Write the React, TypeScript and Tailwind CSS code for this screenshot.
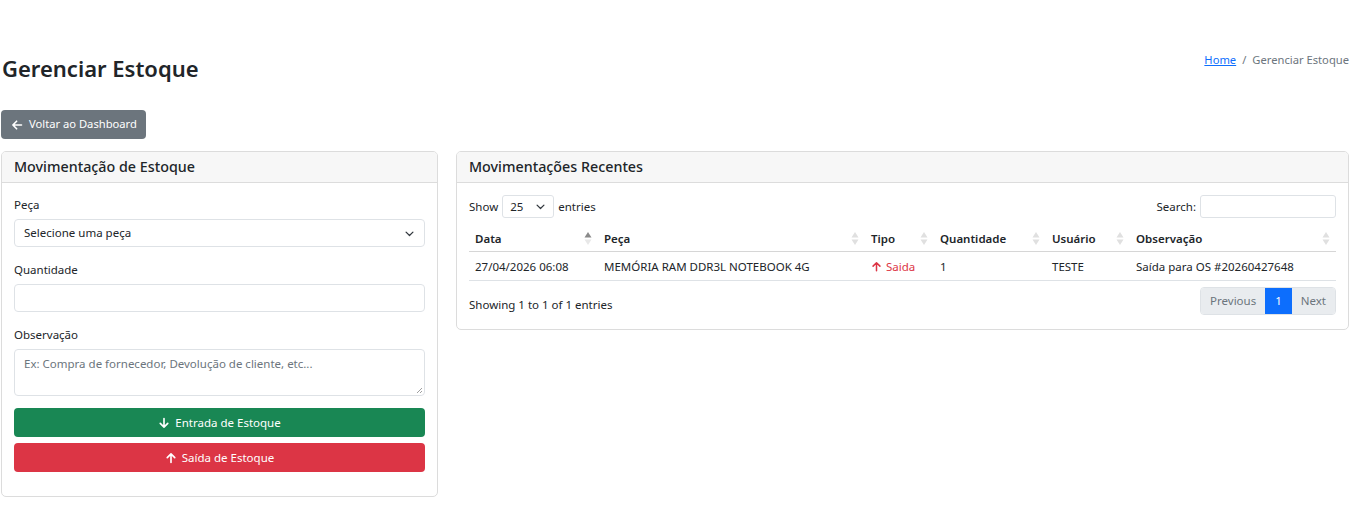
import React from "react";

const font = { fontFamily: '"Noto Sans", "Open Sans", sans-serif' };

function SortIcon({ active }: { active?: boolean }) {
  return (
    <svg width="8" height="15" viewBox="0 0 8 15" className="shrink-0">
      <path d="M4 1 L7.5 6.5 H0.5 Z" fill={active ? "#8a8a8a" : "#e0e0e0"} />
      <path d="M4 14 L7.5 8.5 H0.5 Z" fill={active ? "#e8e8e8" : "#e0e0e0"} />
    </svg>
  );
}

function Chevron() {
  return (
    <svg width="11" height="11" viewBox="0 0 16 16" fill="none" stroke="#343a40" strokeWidth="1.8" strokeLinecap="round" strokeLinejoin="round">
      <path d="M3 6l5 5 5-5" />
    </svg>
  );
}

function ArrowUp({ color = "#fff", size = 12 }: { color?: string; size?: number }) {
  return (
    <svg width={size} height={size} viewBox="0 0 16 16" fill="none" stroke={color} strokeWidth="2.2" strokeLinecap="round" strokeLinejoin="round">
      <path d="M8 14V2.5M3 7.5l5-5 5 5" />
    </svg>
  );
}
function ArrowDown({ color = "#fff", size = 12 }: { color?: string; size?: number }) {
  return (
    <svg width={size} height={size} viewBox="0 0 16 16" fill="none" stroke={color} strokeWidth="2.2" strokeLinecap="round" strokeLinejoin="round">
      <path d="M8 2v11.5M3 8.5l5 5 5-5" />
    </svg>
  );
}
function ArrowLeft() {
  return (
    <svg width="12" height="12" viewBox="0 0 16 16" fill="none" stroke="#fff" strokeWidth="2.2" strokeLinecap="round" strokeLinejoin="round">
      <path d="M14 8H2.5M7.5 3l-5 5 5 5" />
    </svg>
  );
}

export default function App() {
  const th = "h-[25px] px-[6px] text-left font-semibold text-[11.5px] text-[#212529]";
  const td = "px-[6px] h-[29px] pt-[2px]";
  return (
    <div className="min-h-[522px] bg-white text-[#212529] text-[11.5px]" style={font}>
      <div className="pl-[1px] pr-[8px] pt-[52px]">
        <div className="flex items-start justify-between">
          <h1 className="text-[22px] font-semibold leading-[34px] -mt-[1px] pl-[1px]">Gerenciar Estoque</h1>
          <div className="flex items-center gap-[6px] text-[11.2px] text-[#6c757d] mt-[0px]">
            <a className="text-[#0d6efd] underline">Home</a>
            <span>/</span>
            <span className="text-[#6c757d]">Gerenciar Estoque</span>
          </div>
        </div>

        <div className="mt-[25px]">
          <button className="flex items-center gap-[6px] h-[29px] pl-[10px] pr-[9px] rounded-[4px] bg-[#6c757d] text-white text-[11.2px]">
            <ArrowLeft />
            Voltar ao Dashboard
          </button>
        </div>

        <div className="mt-[12px] grid grid-cols-[437px_1fr] gap-[18px] items-start">
          {/* Left card */}
          <div className="border border-[#dcdcdc] rounded-[5px] overflow-hidden">
            <div className="h-[31px] bg-[#f7f7f7] border-b border-[#dcdcdc] px-[12px] flex items-center text-[14.3px] font-medium">
              Movimentação de Estoque
            </div>
            <div className="px-[12px] pt-[14px] pb-[24px]">
              <div className="text-[11.5px] leading-[16px]">Peça</div>
              <div className="mt-[6px] h-[28px] border border-[#dee2e6] rounded-[4px] flex items-center justify-between px-[9px] text-[11.5px]">
                <span>Selecione uma peça</span>
                <Chevron />
              </div>
              <div className="mt-[15px] text-[11.5px] leading-[16px]">Quantidade</div>
              <div className="mt-[6px] h-[28px] border border-[#dee2e6] rounded-[4px]" />
              <div className="mt-[15px] text-[11.5px] leading-[16px]">Observação</div>
              <div className="mt-[6px] h-[47px] border border-[#dee2e6] rounded-[4px] px-[9px] pt-[5px] text-[11.5px] text-[#6c757d] relative">
                Ex: Compra de fornecedor, Devolução de cliente, etc...
                <svg className="absolute right-[1px] bottom-[1px]" width="8" height="8" viewBox="0 0 8 8">
                  <path d="M7 2L2 7M7 5L5 7" stroke="#888" strokeWidth="0.8" />
                </svg>
              </div>
              <button className="mt-[12px] w-full h-[29px] rounded-[4px] bg-[#198754] text-white text-[11.5px] flex items-center justify-center gap-[5px]">
                <ArrowDown />
                Entrada de Estoque
              </button>
              <button className="mt-[6px] w-full h-[29px] rounded-[4px] bg-[#dc3545] text-white text-[11.5px] flex items-center justify-center gap-[5px]">
                <ArrowUp />
                Saída de Estoque
              </button>
            </div>
          </div>

          {/* Right card */}
          <div className="border border-[#dcdcdc] rounded-[5px] overflow-hidden">
            <div className="h-[31px] bg-[#f7f7f7] border-b border-[#dcdcdc] px-[12px] flex items-center text-[14.3px] font-medium">
              Movimentações Recentes
            </div>
            <div className="px-[12px] pt-[12px] pb-[14px]">
              <div className="flex items-center justify-between text-[11.5px] h-[23px]">
                <div className="flex items-center gap-[4px]">
                  <span>Show</span>
                  <div className="w-[52px] h-[23px] border border-[#dee2e6] rounded-[3px] flex items-center justify-between px-[7px]">
                    <span>25</span>
                    <Chevron />
                  </div>
                  <span>entries</span>
                </div>
                <div className="flex items-center gap-[4px]">
                  <span>Search:</span>
                  <div className="w-[136px] h-[23px] border border-[#dee2e6] rounded-[3px]" />
                </div>
              </div>
              <table className="w-full mt-[8px] border-collapse text-[11.5px]">
                <thead>
                  <tr className="border-b border-[#d6d6d6]">
                    <th className={th + " w-[129px]"}><div className="flex items-center justify-between">Data<SortIcon active /></div></th>
                    <th className={th + " w-[267px]"}><div className="flex items-center justify-between">Peça<SortIcon /></div></th>
                    <th className={th + " w-[69px]"}><div className="flex items-center justify-between">Tipo<SortIcon /></div></th>
                    <th className={th + " w-[112px]"}><div className="flex items-center justify-between">Quantidade<SortIcon /></div></th>
                    <th className={th + " w-[84px]"}><div className="flex items-center justify-between">Usuário<SortIcon /></div></th>
                    <th className={th}><div className="flex items-center justify-between">Observação<SortIcon /></div></th>
                  </tr>
                </thead>
                <tbody>
                  <tr className="border-b border-[#dee2e6]">
                    <td className={td}>27/04/2026 06:08</td>
                    <td className={td}>MEMÓRIA RAM DDR3L NOTEBOOK 4G</td>
                    <td className={td + " text-[#dc3545]"}><span className="flex items-center gap-[4px]"><ArrowUp color="#dc3545" size={11} />Saida</span></td>
                    <td className={td}>1</td>
                    <td className={td}>TESTE</td>
                    <td className={td}>Saída para OS #20260427648</td>
                  </tr>
                </tbody>
              </table>
              <div className="flex items-start justify-between mt-[6px] text-[11.5px]">
                <span className="pt-[10px] leading-[16px]">Showing 1 to 1 of 1 entries</span>
                <div className="flex h-[28px] border border-[#dee2e6] rounded-[4px] overflow-hidden">
                  <span className="px-[9px] flex items-center bg-[#e9ecef] text-[#6c757d]">Previous</span>
                  <span className="px-[10px] flex items-center bg-[#0d6efd] text-white">1</span>
                  <span className="px-[9px] flex items-center bg-[#e9ecef] text-[#6c757d]">Next</span>
                </div>
              </div>
            </div>
          </div>
        </div>
      </div>
    </div>
  );
}
